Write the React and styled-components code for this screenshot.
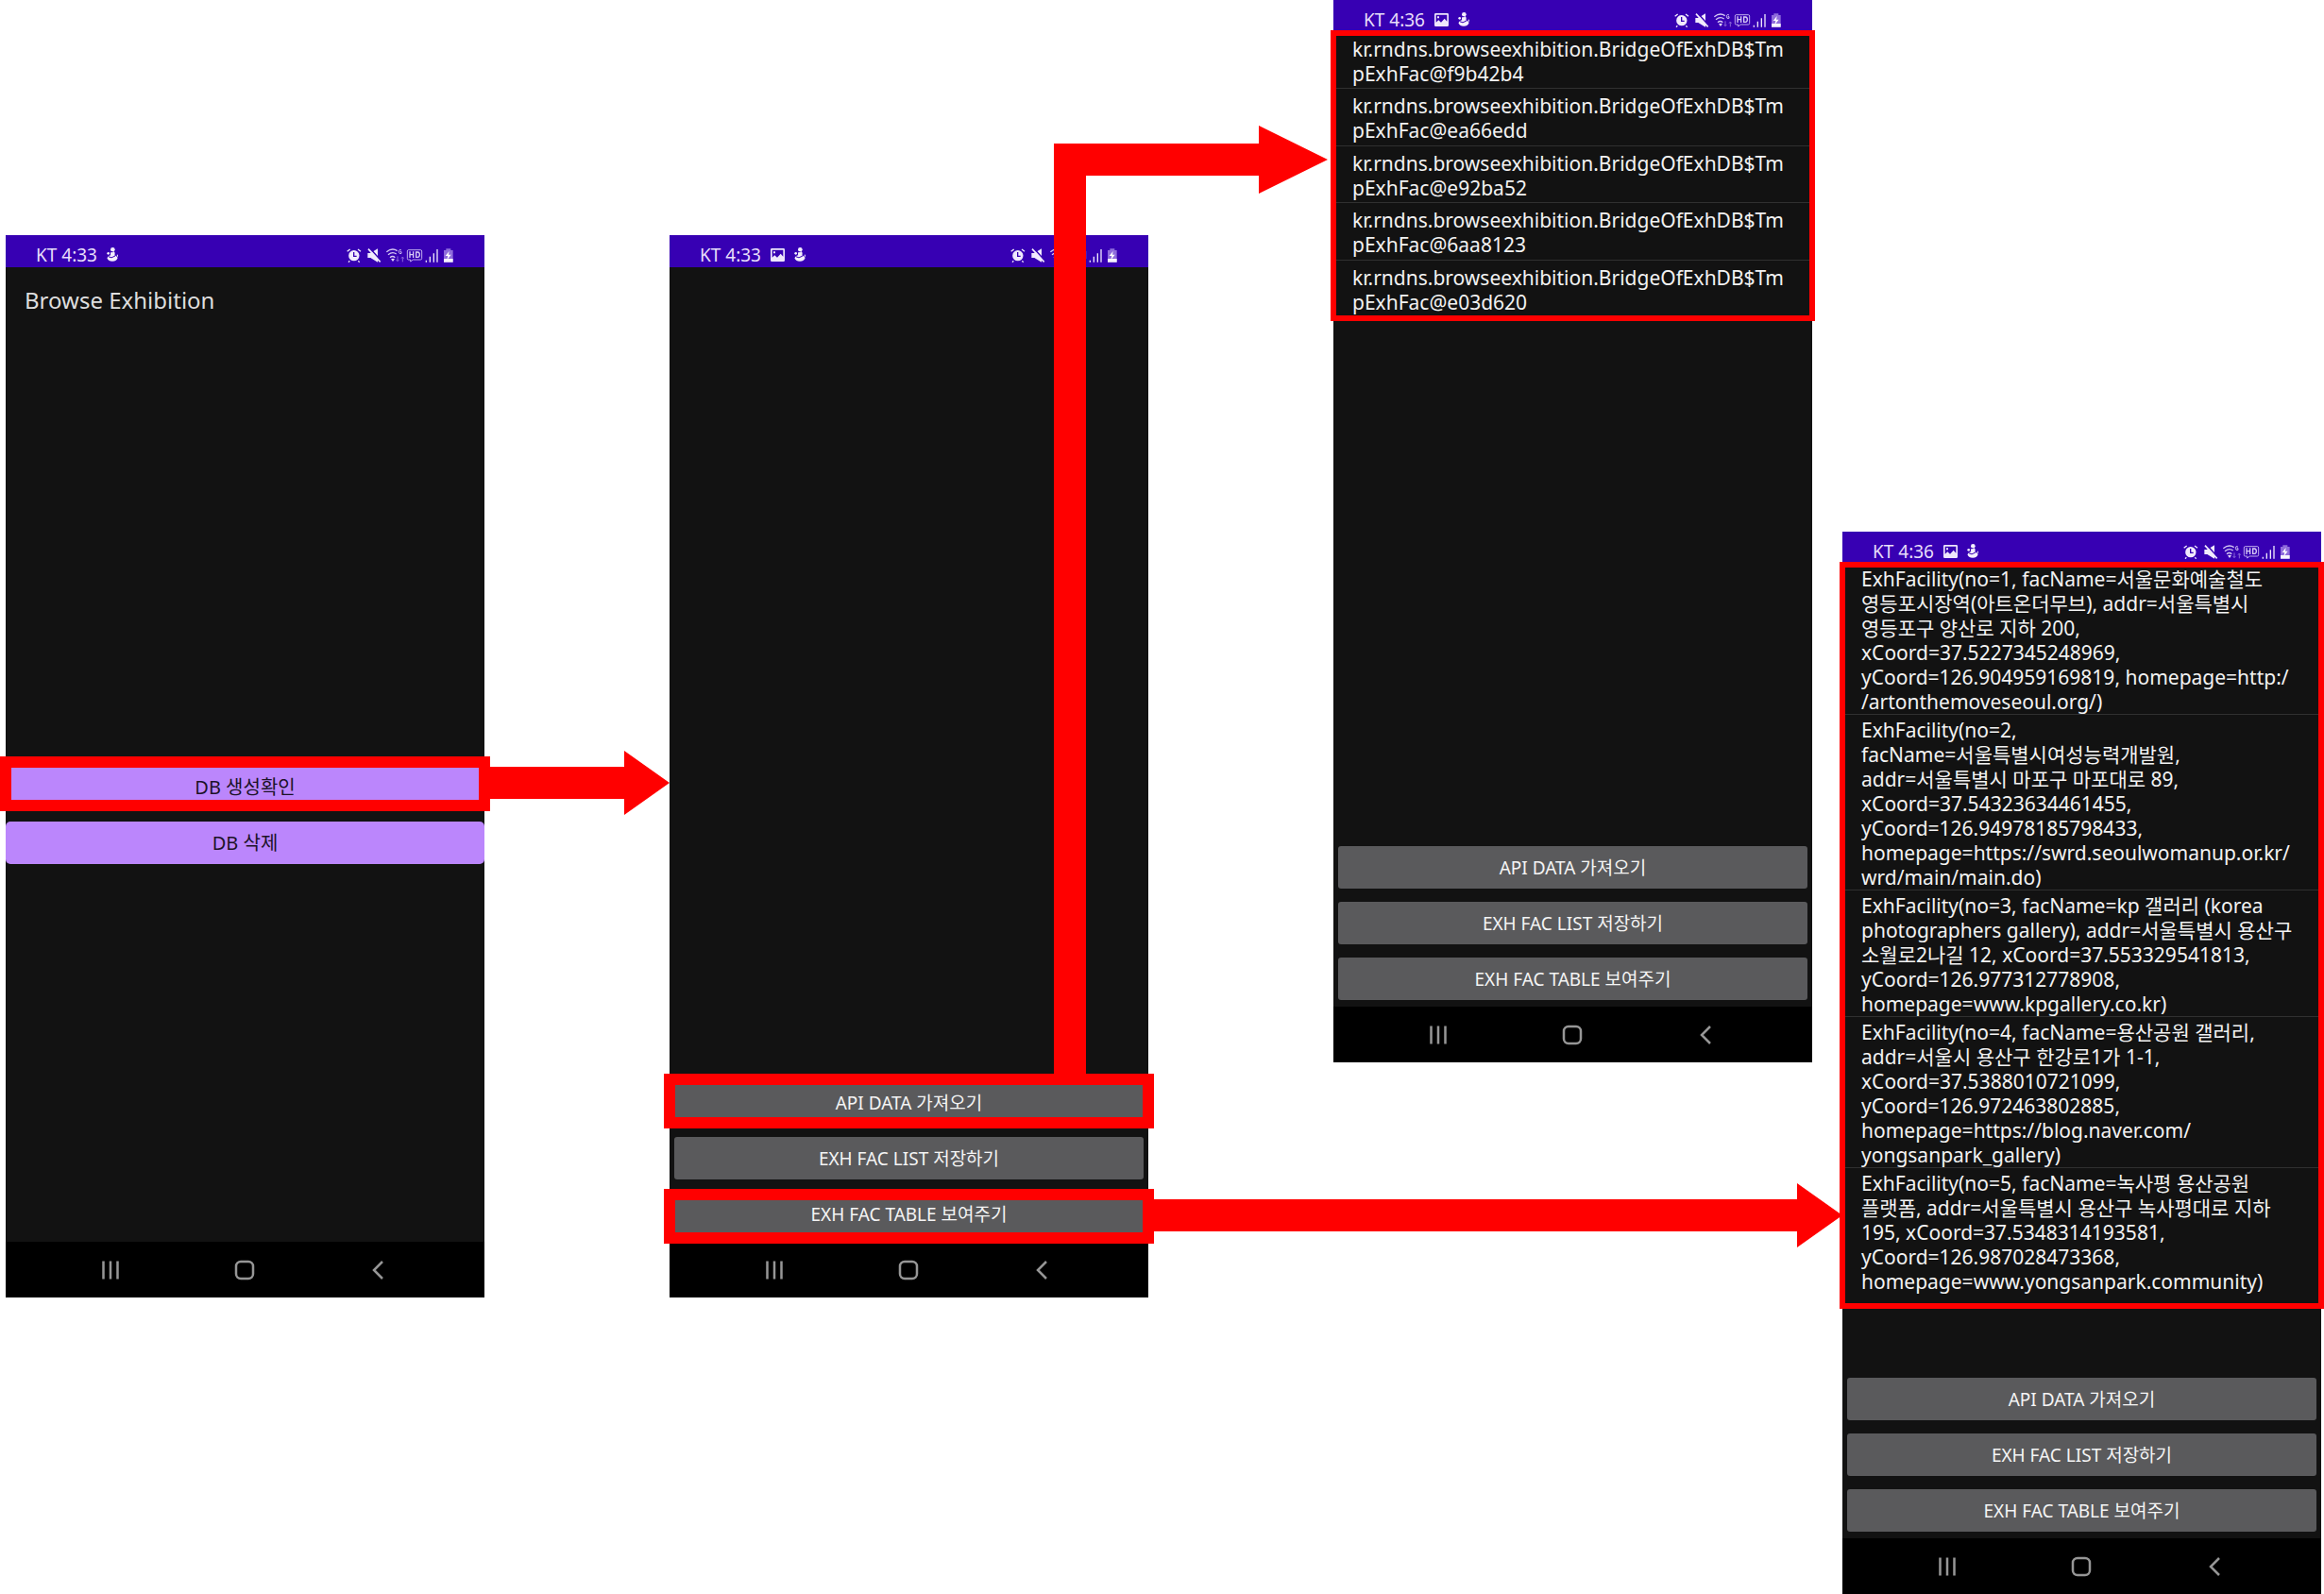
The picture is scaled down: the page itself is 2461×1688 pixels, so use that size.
import React from "react";
import styled, { createGlobalStyle } from "styled-components";

const RED = "#ff0000";

const GlobalStyle = createGlobalStyle`
  *, *::before, *::after { box-sizing: border-box; }
  body {
    margin: 0;
    background: #fff;
    font-family: "Noto Sans", "Noto Sans CJK KR", sans-serif;
  }
  button { font-family: inherit; border: 0; margin: 0; padding: 0; cursor: pointer; }
`;

/* Four phones with a gutter after each of the first three. */
const Flow = styled.main`
  display: grid;
  grid-template-columns: 507fr 196fr 507fr 196fr 507fr 32fr 507fr;
  align-items: start;
  padding: 0 3px 0 6px;
  overflow: hidden;
`;

const Phone = styled.section`
  grid-row: 1;
  grid-column: ${(p) => p.$column};
  margin-top: ${(p) => p.$drop}px;
  min-height: 1125px;
  display: flex;
  flex-direction: column;
  background: #121212;
  color: #f2f2f2;
`;

const StatusBar = styled.header`
  display: flex;
  align-items: center;
  justify-content: space-between;
  height: 34px;
  padding: 7px 33px 0 32px;
  background: #3700b3;
  color: #e8defa;
  font-size: 19px;
  line-height: 26px;
`;

const StatusGroup = styled.div`
  display: flex;
  align-items: center;
  gap: 10px;
`;

const AppTitle = styled.h1`
  margin: 0;
  padding: 0 20px;
  font-size: 24px;
  font-weight: 400;
  line-height: 70px;
  color: #dedede;
`;

const ListPane = styled.div`
  position: relative;
`;

const List = styled.ul`
  list-style: none;
  margin: 0;
  padding: 0;
  display: grid;
  ${(p) => p.$even && "grid-auto-rows: 1fr; height: 302px;"}
`;

const ListRow = styled.li`
  padding: ${(p) => (p.$roomy ? "5px" : "3px")} 20px 0;
  border-bottom: 1px solid #303030;
  font-size: 21px;
  line-height: 26px;
  &:last-child { border-bottom-color: transparent; }
`;

const TextLine = styled.span`
  display: block;
  white-space: nowrap;
`;

const Frame = styled.div`
  position: absolute;
  pointer-events: none;
  z-index: 2;
  top: -${(p) => p.$rise}px;
  left: -${(p) => p.$bleed}px;
  right: -${(p) => p.$bleed}px;
  height: ${(p) => p.$height}px;
  border: ${(p) => p.$thick}px solid ${RED};
`;

const StartActions = styled.div`
  display: grid;
  gap: 14px;
  margin-top: 458px;
`;

const BottomActions = styled.div`
  display: grid;
  gap: 14px;
  margin-top: auto;
  padding: 0 5px 7px;
`;

const ActionSlot = styled.div`
  position: relative;
  display: grid;
`;

const PurpleButton = styled.button`
  height: 45px;
  border-radius: 5px;
  background: #bb86fc;
  color: #1c1228;
  font-size: 20px;
  line-height: 26px;
`;

const GreyButton = styled.button`
  height: 45px;
  border-radius: 3px;
  background: #5a5a5c;
  color: #f4f4f4;
  font-size: 19px;
  line-height: 26px;
`;

const NavBar = styled.nav`
  display: flex;
  align-items: center;
  justify-content: space-between;
  height: 59px;
  padding: 0 102px 0 100px;
  background: #000;
  ${(p) => p.$pushed && "margin-top: auto;"}
`;

const NavButton = styled.button`
  display: flex;
  background: none;
  color: #969696;
`;

const StraightArrow = styled.div`
  grid-row: 1;
  grid-column: ${(p) => p.$from} / ${(p) => p.$to};
  margin: ${(p) => p.$drop}px 0 0 5px;
  display: flex;
  align-items: center;
  z-index: 3;
`;

const Shaft = styled.div`
  flex: 1;
  height: 34px;
  background: ${RED};
`;

const Drawing = styled.svg`
  display: block;
  flex: none;
`;

const ElbowArrow = styled(Drawing)`
  grid-row: 1;
  grid-column: 3 / 5;
  justify-self: end;
  margin: 133px 6px 0 0;
  z-index: 3;
`;

function PictureIcon() {
  return (
    <Drawing width="15" height="14" viewBox="267 43 45 42" aria-hidden="true">
      <path
        fill="#eee6fc"
        fillRule="evenodd"
        d="M271 43h37q4 0 4 4v34q0 4-4 4h-37q-4 0-4-4V47q0-4 4-4zm1 5v24l8-7 8 7 11-12 8 9V48zM276 53h6v6h-6z"
      />
    </Drawing>
  );
}

function SnowmanIcon() {
  return (
    <Drawing width="13" height="15" viewBox="340 41 39 45" aria-hidden="true">
      <circle cx="359" cy="48" r="7" fill="#f4effd" />
      <circle cx="345" cy="60" r="4" fill="#f4effd" />
      <ellipse cx="359" cy="61" rx="7" ry="8" fill="#f4effd" />
      <ellipse cx="358" cy="75" rx="16" ry="10" fill="#f4effd" />
      <path fill="none" stroke="#f4effd" strokeWidth="3" d="M371 74q5-4 3-10" />
      <path fill="none" stroke="#3700b3" strokeWidth="3" d="M345 70q9 8 22-2M352 55h8" />
    </Drawing>
  );
}

function SystemIcons() {
  return (
    <Drawing width="113" height="16" viewBox="48 34 339 48" aria-hidden="true">
      <g fill="none" stroke="#f1eafd">
        <path strokeWidth="4" d="M50 47l9-7M93 47l-9-7M58 77l-4 4M85 77l4 4" />
        <circle cx="71.500" cy="60" r="17" fill="#f1eafd" stroke="none" />
        <path stroke="#3700b3" strokeWidth="4" d="M71 49v13h9" />
        <path fill="#f1eafd" stroke="none" d="M115 52h9l23-14v43l-23-14h-9z" />
        <path stroke="#3700b3" strokeWidth="5" d="M121 36l36 40" />
        <path strokeWidth="5" d="M117 39l38 41" />
        <g stroke="#d6c8f4" strokeWidth="4">
          <path d="M175 48q18-14 34-3M180 57q14-11 26-2M186 66q8-7 16 0" />
        </g>
        <path fill="#e0d5f8" stroke="none" d="M189 71q6-4 12 0l-6 8z" />
        <path stroke="#cdbcf2" strokeWidth="3" d="M222 43q-8-4-8 4 0 9 8 6v-5h-4" />
        <path
          stroke="#8a66d8"
          strokeWidth="3"
          d="M210 62v15M206 73l4 5 4-5M226 80V65M222 69l4-5 4 5"
        />
        <path
          stroke="#c0abee"
          strokeWidth="3"
          d="M244 42h39q4 0 4 4v23q0 4-4 4h-24l-8 6v-6h-7q-3 0-3-4V46q0-4 3-4z"
        />
        <path stroke="#d9ccf6" strokeWidth="4" d="M249 47v20M260 47v20M249 57h11M269 49v16h5q6-1 6-8t-6-8z" />
        <path stroke="#eee6fc" strokeWidth="4" d="M301 75v6M313 63v18M325 53v28M336 40v41" />
        <path
          fill="#8f6cdc"
          stroke="none"
          d="M364 38h15v5h7v38h-29V43h7z"
        />
        <path fill="#f7f3fe" stroke="none" d="M357 70h29v11h-29z" />
        <path fill="#fff" stroke="none" d="M374 46l-12 15h8l-3 13 13-17h-8z" />
      </g>
    </Drawing>
  );
}

function ArrowHead() {
  return (
    <Drawing width="48" height="68" viewBox="0 0 48 68" aria-hidden="true">
      <path fill={RED} d="M0 0l48 34L0 68z" />
    </Drawing>
  );
}

function Status({ time, picture }) {
  return (
    <StatusBar>
      <StatusGroup>
        <span>KT {time}</span>
        {picture && <PictureIcon />}
        <SnowmanIcon />
      </StatusGroup>
      <SystemIcons />
    </StatusBar>
  );
}

function Navigation({ pushed }) {
  return (
    <NavBar $pushed={pushed} aria-label="System">
      <NavButton type="button" aria-label="Recent apps">
        <Drawing width="22" height="22" viewBox="0 0 22 22">
          <path fill="none" stroke="currentColor" strokeWidth="2.500" d="M3.500 1.500v19M11 1.500v19M18.500 1.500v19" />
        </Drawing>
      </NavButton>
      <NavButton type="button" aria-label="Home">
        <Drawing width="22" height="22" viewBox="0 0 22 22">
          <rect x="2" y="2" width="18" height="18" rx="5" fill="none" stroke="currentColor" strokeWidth="2.500" />
        </Drawing>
      </NavButton>
      <NavButton type="button" aria-label="Back">
        <Drawing width="22" height="22" viewBox="0 0 22 22">
          <path fill="none" stroke="currentColor" strokeWidth="2.500" d="M16 2l-9 9 9 9" />
        </Drawing>
      </NavButton>
    </NavBar>
  );
}

const ACTIONS = ["API DATA 가져오기", "EXH FAC LIST 저장하기", "EXH FAC TABLE 보여주기"];

function Actions({ frames = {} }) {
  return (
    <BottomActions>
      {ACTIONS.map((label, i) => (
        <ActionSlot key={label}>
          <GreyButton type="button">{label}</GreyButton>
          {frames[i] && <Frame $rise={frames[i]} $bleed={11} $height={58} $thick={12} />}
        </ActionSlot>
      ))}
    </BottomActions>
  );
}

function Rows({ items, even, frameHeight }) {
  return (
    <ListPane>
      <List $even={even}>
        {items.map((lines) => (
          <ListRow key={lines.join("")} $roomy={even}>
            {lines.map((line) => (
              <TextLine key={line}>{line}</TextLine>
            ))}
          </ListRow>
        ))}
      </List>
      <Frame $rise={2} $bleed={3} $height={frameHeight} $thick={6} />
    </ListPane>
  );
}

const OBJECTS = ["f9b42b4", "ea66edd", "e92ba52", "6aa8123", "e03d620"].map((id) => [
  "kr.rndns.browseexhibition.BridgeOfExhDB$Tm",
  `pExhFac@${id}`,
]);

const FACILITIES = [
  [
    "ExhFacility(no=1, facName=서울문화예술철도",
    "영등포시장역(아트온더무브), addr=서울특별시",
    "영등포구 양산로 지하 200,",
    "xCoord=37.5227345248969,",
    "yCoord=126.904959169819, homepage=http:/",
    "/artonthemoveseoul.org/)",
  ],
  [
    "ExhFacility(no=2,",
    "facName=서울특별시여성능력개발원,",
    "addr=서울특별시 마포구 마포대로 89,",
    "xCoord=37.54323634461455,",
    "yCoord=126.94978185798433,",
    "homepage=https://swrd.seoulwomanup.or.kr/",
    "wrd/main/main.do)",
  ],
  [
    "ExhFacility(no=3, facName=kp 갤러리 (korea",
    "photographers gallery), addr=서울특별시 용산구",
    "소월로2나길 12, xCoord=37.553329541813,",
    "yCoord=126.977312778908,",
    "homepage=www.kpgallery.co.kr)",
  ],
  [
    "ExhFacility(no=4, facName=용산공원 갤러리,",
    "addr=서울시 용산구 한강로1가 1-1,",
    "xCoord=37.5388010721099,",
    "yCoord=126.972463802885,",
    "homepage=https://blog.naver.com/",
    "yongsanpark_gallery)",
  ],
  [
    "ExhFacility(no=5, facName=녹사평 용산공원",
    "플랫폼, addr=서울특별시 용산구 녹사평대로 지하",
    "195, xCoord=37.5348314193581,",
    "yCoord=126.987028473368,",
    "homepage=www.yongsanpark.community)",
  ],
];

export default function App() {
  return (
    <>
      <GlobalStyle />
      <Flow>
        <Phone $column={1} $drop={249}>
          <Status time="4:33" />
          <AppTitle>Browse Exhibition</AppTitle>
          <StartActions>
            <ActionSlot>
              <PurpleButton type="button">DB 생성확인</PurpleButton>
              <Frame $rise={10} $bleed={6} $height={58} $thick={12} />
            </ActionSlot>
            <ActionSlot>
              <PurpleButton type="button">DB 삭제</PurpleButton>
            </ActionSlot>
          </StartActions>
          <Navigation pushed />
        </Phone>

        <Phone $column={3} $drop={249}>
          <Status time="4:33" picture />
          <Actions frames={{ 0: 8, 2: 4 }} />
          <Navigation />
        </Phone>

        <Phone $column={5} $drop={0}>
          <Status time="4:36" picture />
          <Rows items={OBJECTS} even frameHeight={308} />
          <Actions />
          <Navigation />
        </Phone>

        <Phone $column={7} $drop={563}>
          <Status time="4:36" picture />
          <Rows items={FACILITIES} frameHeight={791} />
          <Actions />
          <Navigation />
        </Phone>

        <StraightArrow $from={2} $to={3} $drop={795}>
          <Shaft />
          <ArrowHead />
        </StraightArrow>
        <ElbowArrow width="290" height="1004" viewBox="0 0 290 1004" aria-hidden="true">
          <path fill={RED} d="M0 1004V19h217V0l73 36-73 36V53H34v951z" />
        </ElbowArrow>
        <StraightArrow $from={4} $to={7} $drop={1253}>
          <Shaft />
          <ArrowHead />
        </StraightArrow>
      </Flow>
    </>
  );
}
